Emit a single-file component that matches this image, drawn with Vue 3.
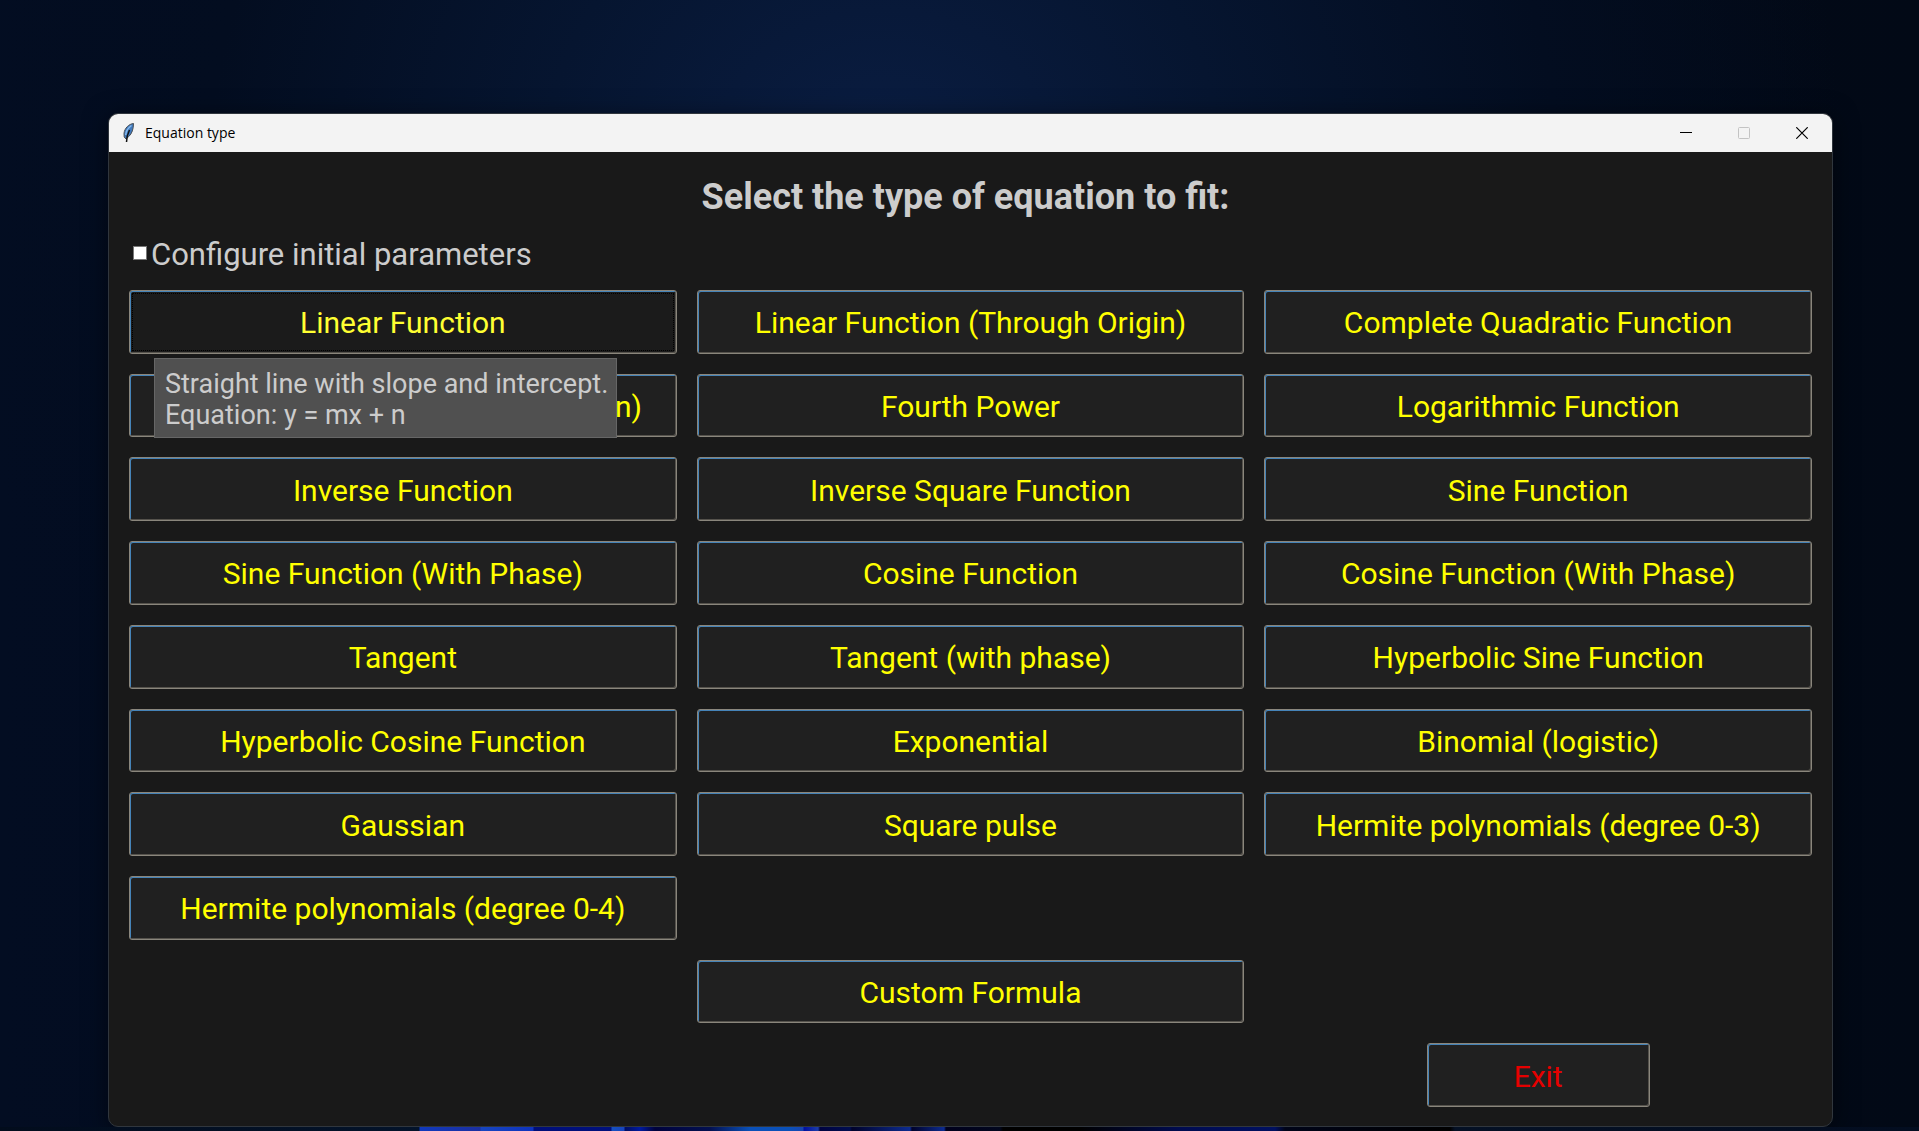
<script setup>
import { ref } from 'vue'

const configure = ref(false)
const equations = [
  'Linear Function', 'Linear Function (Through Origin)', 'Complete Quadratic Function',
  'Quadratic Function (Through Origin)', 'Fourth Power', 'Logarithmic Function',
  'Inverse Function', 'Inverse Square Function', 'Sine Function',
  'Sine Function (With Phase)', 'Cosine Function', 'Cosine Function (With Phase)',
  'Tangent', 'Tangent (with phase)', 'Hyperbolic Sine Function',
  'Hyperbolic Cosine Function', 'Exponential', 'Binomial (logistic)',
  'Gaussian', 'Square pulse', 'Hermite polynomials (degree 0-3)',
  'Hermite polynomials (degree 0-4)',
]
</script>

<template>
  <div class="desktop">
    <main class="window">
      <header class="titlebar">
        <svg class="feather" viewBox="0 0 14 22" aria-hidden="true">
          <path d="M11.500 1.500C7 2 2.500 6 2 11.500L2.200 15L4 17L6.800 14.500C10 11.500 11.500 7 11.500 1.500z" fill="#3f79bd" stroke="#4a4f55" />
          <path d="M9.500 3.500C6 6 4 9 3.600 13" fill="none" stroke="#86b8ec" stroke-width="1.500" />
          <path d="M7.500 8C6 11 4.500 14 4.500 20" fill="none" stroke="#111" stroke-width="1.500" />
        </svg>
        <span class="caption">Equation type</span>
        <div class="controls">
          <button type="button" aria-label="Minimize">
            <svg viewBox="0 0 12 12"><path d="M0 5.500h12" stroke="#000" /></svg>
          </button>
          <button type="button" aria-label="Maximize" disabled>
            <svg viewBox="0 0 12 12"><rect x=".5" y=".5" width="11" height="11" rx="1" fill="none" stroke="#c3c3c3" /></svg>
          </button>
          <button type="button" aria-label="Close">
            <svg viewBox="0 0 12 12"><path d="M.3.3l11.400 11.400M11.700.3L.3 11.700" stroke="#000" stroke-width="1.200" /></svg>
          </button>
        </div>
      </header>

      <section class="content">
        <h1>Select the type of equation to fit:</h1>
        <label class="option">
          <input v-model="configure" type="checkbox" />
          <span>Configure initial parameters</span>
        </label>
        <div class="grid">
          <div v-for="(name, i) in equations" :key="name" class="cell">
            <button type="button" class="choice" :class="{ active: i === 0 }">{{ name }}</button>
            <div v-if="i === 0" class="tooltip" role="tooltip">
              Straight line with slope and intercept.<br />Equation: y = mx + n
            </div>
          </div>
          <div class="cell custom"><button type="button" class="choice">Custom Formula</button></div>
          <div class="cell leave"><button type="button" class="choice exit">Exit</button></div>
        </div>
      </section>
    </main>
    <div class="bloom"></div>
  </div>
</template>

<style>
body {
  margin: 0;
  background: #020a18;
}
</style>

<style scoped>
.desktop {
  box-sizing: border-box;
  min-height: 100vh;
  padding: 113px 86px 0 108px;
  display: flex;
  flex-direction: column;
  font-family: Roboto, "Liberation Sans", sans-serif;
  background:
    radial-gradient(ellipse 50% 75% at 46% 14%, #0a1d42 0%, #061530 35%, #030d20 70%, transparent 100%),
    linear-gradient(90deg, #030d22 0%, #020a1a 60%, #020916 100%);
}
.window {
  flex: 1;
  display: flex;
  flex-direction: column;
  border: 1px solid #30363d;
  border-radius: 10px;
  overflow: hidden;
  background: #191919;
  box-shadow: 0 4px 24px rgba(0, 0, 0, 0.5);
}
.titlebar {
  height: 38px;
  display: flex;
  align-items: center;
  padding: 0 1px 0 13px;
  background: #f3f3f3;
}
.feather {
  width: 14px;
  height: 22px;
}
.caption {
  margin-left: 9px;
  font: 14px/20px "Open Sans", sans-serif;
  color: #000;
}
.controls {
  margin-left: auto;
  display: flex;
  align-self: stretch;
}
.controls button {
  width: 58px;
  padding: 0;
  border: 0;
  background: none;
}
.controls svg {
  display: block;
  width: 12px;
  height: 12px;
  margin: auto;
}
.content {
  flex: 1;
  display: flex;
  flex-direction: column;
  padding: 21px 20px 19px;
}
h1 {
  margin: 0;
  padding-right: 10px;
  text-align: center;
  font-size: 36px;
  line-height: 48px;
  font-weight: 700;
  color: #ccc;
}
.option {
  align-self: flex-start;
  display: flex;
  align-items: center;
  margin: 14px 0 15px 4px;
  font-size: 31px;
  line-height: 40px;
  color: #ccc;
}
.option input {
  appearance: none;
  width: 14px;
  height: 14px;
  margin: 0 4px 4px 0;
  border: 1px solid #777;
  background: #fff;
}
.option input:checked {
  background: #3f79bd;
}
.grid {
  flex: 1;
  display: grid;
  grid-template-columns: repeat(3, minmax(0, 1fr));
  grid-auto-rows: 1fr;
  gap: 20px;
}
.cell {
  position: relative;
  display: flex;
  justify-content: center;
}
.custom {
  grid-column: 2;
  grid-row: 9;
}
.leave {
  grid-column: 3;
  grid-row: 10;
}
.choice {
  flex: 1;
  min-height: 60px;
  padding: 3px 0 0;
  border: 1px solid #8a867c;
  border-radius: 3px;
  box-shadow: inset 1px 1px #4583b8, inset -1px -1px #55524c;
  background: #202020;
  font: 30px/36px Roboto, "Liberation Sans", sans-serif;
  color: #ff0;
}
.choice.active {
  background: #1b1b1b;
  color: #ffff32;
  outline: 1px dotted #000;
  outline-offset: -4px;
}
.choice.exit {
  flex: 0 0 223px;
  color: #e60000;
}
.tooltip {
  position: absolute;
  z-index: 1;
  top: 68px;
  left: 25px;
  box-sizing: border-box;
  min-width: 461px;
  padding: 10px 8px 6px 10px;
  border: 1px solid #666;
  background: #505050;
  font-size: 27px;
  line-height: 31px;
  white-space: nowrap;
  color: #ccc;
}
.bloom {
  height: 4px;
  margin: 0 -86px 0 -108px;
  background: linear-gradient(90deg,
    #020c1c 0, #03132a 419px, #1039bd 420px, #1b2fa0 480px, #1745c0 481px, #0e33bd 533px,
    #000e78 534px, #00107c 611px, #1550c0 612px, #1744bd 624px, #000d60 625px, #001aa0 640px,
    #00023c 655px, #031050 710px, #0a50b8 750px, #0a50b8 790px, #1844b0 803px, #000fa0 804px, #1b3ca8 818px,
    #000340 820px, #000d50 850px, #00022a 852px, #0c2b90 910px, #00022a 912px, #0c2b90 944px,
    #00001c 946px, #02071e 1000px, #000 1003px, #000 1080px, #000b50 1180px, #001060 1275px,
    #000418 1285px, #000 1450px, #041024 1455px, #030d20 100%);
}
</style>
